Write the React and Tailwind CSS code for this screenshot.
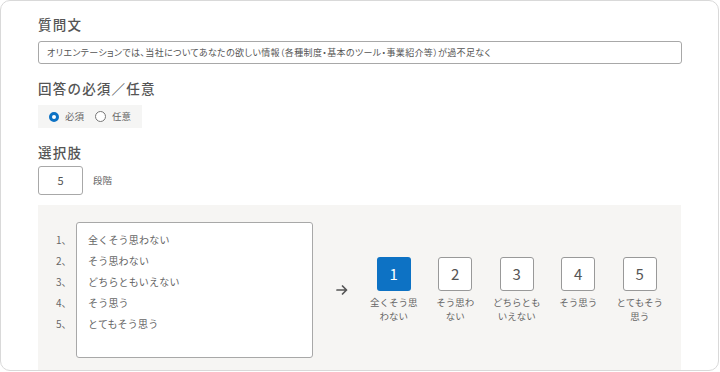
import React from 'react';

const font = { fontFamily: '"Noto Sans CJK JP", "Noto Sans", sans-serif' };

const choices = [
  { n: 1, label: ['全くそう思', 'わない'] },
  { n: 2, label: ['そう思わ', 'ない'] },
  { n: 3, label: ['どちらとも', 'いえない'] },
  { n: 4, label: ['そう思う'] },
  { n: 5, label: ['とてもそう', '思う'] },
];

const items = ['全くそう思わない', 'そう思わない', 'どちらともいえない', 'そう思う', 'とてもそう思う'];

const Heading = ({ children, className = '' }) => (
  <h3 className={`text-[13.5px] leading-[20px] font-medium tracking-[0.09em] text-[#555] ${className}`}>{children}</h3>
);

const App = () => {
  return (
    <div className="w-[720px] h-[372px] bg-white" style={font}>
      <div className="w-[719px] h-[371px] border border-[#d9d9d9] rounded-[10px] overflow-hidden pl-[37px] pr-[37px] pt-[13px]">
        {/* 質問文 */}
        <Heading>質問文</Heading>
        <div className="mt-[7px] w-[644px] h-[23px] border border-[#a8a8a8] rounded-[3px] px-[8px] flex items-center text-[9px] text-[#555] tracking-[0.04em] [font-feature-settings:'palt']">
          オリエンテーションでは、当社についてあなたの欲しい情報（各種制度・基本のツール・事業紹介等）が過不足なく
        </div>

        {/* 回答の必須／任意 */}
        <Heading className="mt-[14px]">回答の必須／任意</Heading>
        <div className="mt-[7px] w-[104px] h-[23px] bg-[#f5f5f4] flex items-center pl-[11px] text-[9.5px] text-[#666]">
          <span className="w-[10px] h-[10px] rounded-full border-[3px] border-[#0d72c4] bg-white" />
          <span className="ml-[6px]">必須</span>
          <span className="ml-[11px] w-[11px] h-[11px] rounded-full border border-[#777] bg-white" />
          <span className="ml-[6px]">任意</span>
        </div>

        {/* 選択肢 */}
        <Heading className="mt-[14px]">選択肢</Heading>
        <div className="mt-[4px] flex items-center">
          <div className="w-[45px] h-[29px] border border-[#a8a8a8] rounded-[3px] flex items-center justify-center text-[11px] text-[#555]">
            5
          </div>
          <span className="ml-[10px] text-[9.5px] text-[#666]">段階</span>
        </div>

        <div className="mt-[10px] w-[643px] h-[200px] bg-[#f6f5f3] pl-[18px] pt-[17px] flex items-start">
          <div className="flex items-start">
            <div className="pt-[7px] w-[20px] text-[10px] leading-[21px] text-[#666]">
              {items.map((_, i) => (
                <div key={i}>{i + 1}、</div>
              ))}
            </div>
            <div className="w-[237px] h-[136px] bg-white border border-[#a8a8a8] rounded-[3px] pl-[11px] pt-[6px] text-[10px] leading-[21px] text-[#666] tracking-[0.02em]">
              {items.map((t) => (
                <div key={t}>{t}</div>
              ))}
            </div>
          </div>

          <div className="h-[136px] flex items-center">
            <svg className="ml-[23px]" width="12" height="12" viewBox="0 0 12 12" fill="none" stroke="#555" strokeWidth="1.7" strokeLinecap="round" strokeLinejoin="round">
              <path d="M1 6h9.5M6.5 2l4 4-4 4" />
            </svg>
            <div className="ml-[15px] flex">
              {choices.map((c) => (
                <div key={c.n} className="w-[61.5px] flex flex-col items-center">
                  <div
                    className={
                      c.n === 1
                        ? 'w-[34px] h-[34px] rounded-[3px] bg-[#0d72c4] text-white flex items-center justify-center text-[15px]'
                        : 'w-[34px] h-[34px] rounded-[3px] border border-[#999] bg-white text-[#555] flex items-center justify-center text-[15px]'
                    }
                  >
                    {c.n}
                  </div>
                  <div className="mt-[5px] text-center text-[9.5px] leading-[13.5px] text-[#666]">
                    {c.label.map((l) => (
                      <div key={l}>{l}</div>
                    ))}
                  </div>
                </div>
              ))}
            </div>
          </div>
        </div>
      </div>
    </div>
  );
};

export default App;
